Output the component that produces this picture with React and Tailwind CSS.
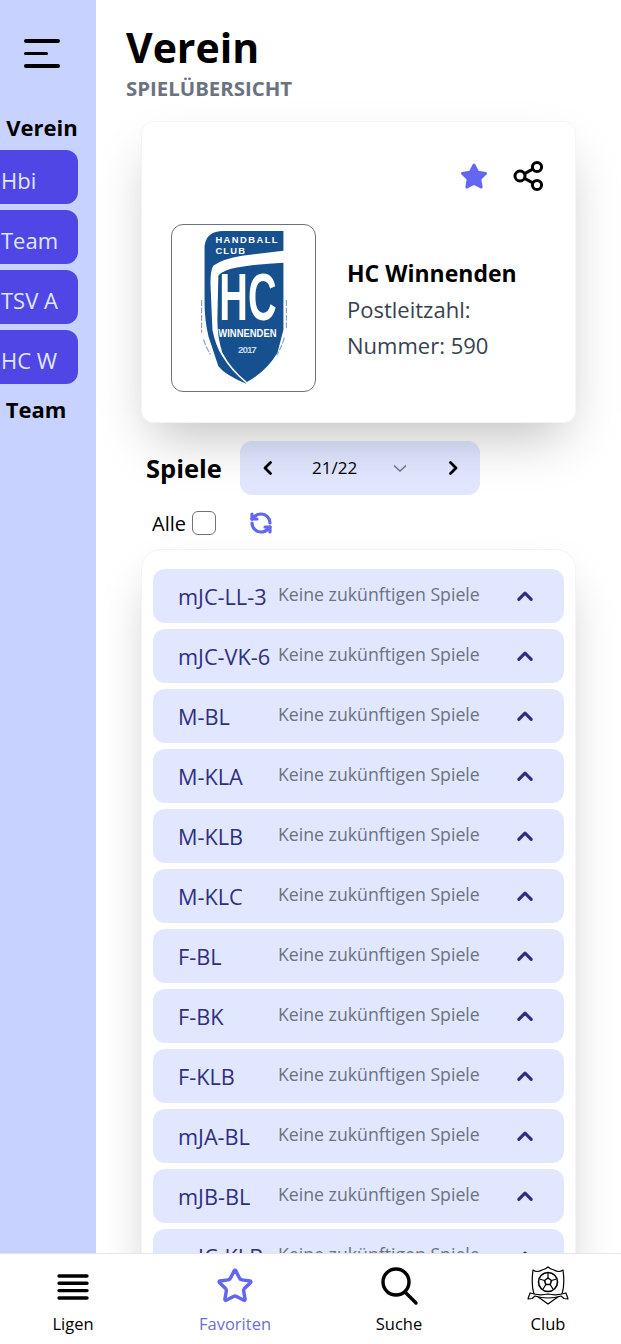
import React from "react";
import { FaStar } from "react-icons/fa";
import { Star, RefreshCcw } from "lucide-react";

const CLUBS = ["Hbi", "Team", "TSV A", "HC W"];
const LEAGUES = [
  "mJC-LL-3",
  "mJC-VK-6",
  "M-BL",
  "M-KLA",
  "M-KLB",
  "M-KLC",
  "F-BL",
  "F-BK",
  "F-KLB",
  "mJA-BL",
  "mJB-BL",
  "mJC-KLB",
];

const Chevron = ({ dir = "left", className = "" }) => (
  <svg viewBox="0 0 16 16" className={className} fill="none" stroke="currentColor" strokeWidth="2.8" strokeLinecap="round" strokeLinejoin="round">
    {dir === "left" && <path d="M10.5 2.5 5 8l5.5 5.5" />}
    {dir === "right" && <path d="M5.5 2.5 11 8l-5.5 5.5" />}
    {dir === "up" && <path d="M2.5 11 8 5.5l5.5 5.5" />}
  </svg>
);

const ClubLogo = () => (
  <svg viewBox="0 0 145 168" className="w-full h-full">
    {/* Band oben und aeusserer Streifen */}
    <path d="M33 21Q35 6 52 6H113V26L71 31Q52 34 42 41Q39 45 39 59L41 106Q44 122 51 133Q60 148 76 161Q54 152 47 143L37 113Q33 96 33 79Z" fill="#17508f" />
    {/* Schild */}
    <path d="M113 38V106L107 129Q96 148 76 159Q60 146 51 129Q46 114 46 96L47 51Q53 45 66 43Q90 39 113 38Z" fill="#17508f" />
    <path d="M30 76V109M32 116Q35 125 39 131M116 76V106M114 114Q111 124 106 132" stroke="#8aa5c4" strokeWidth="1.2" fill="none" strokeDasharray="6 1.5" />
    <text x="44" y="18" fill="#fff" fontSize="9.500" fontWeight="700" fontFamily="Liberation Sans, sans-serif" textLength="63">HANDBALL</text>
    <text x="44" y="29" fill="#fff" fontSize="9.500" fontWeight="700" fontFamily="Liberation Sans, sans-serif" textLength="30">CLUB</text>
    <text x="48" y="96" fill="#fff" fontSize="68" fontWeight="700" fontFamily="Liberation Sans, sans-serif" textLength="58" lengthAdjust="spacingAndGlyphs">HC</text>
    <text x="47" y="113" fill="#fff" fontSize="11" fontWeight="700" fontFamily="Liberation Sans, sans-serif" textLength="59" lengthAdjust="spacingAndGlyphs">WINNENDEN</text>
    <text x="67" y="130" fill="#c9d6e6" fontSize="10" fontWeight="700" fontFamily="Liberation Sans, sans-serif" textLength="19">2017</text>
  </svg>
);

const ShareIcon = () => (
  <svg viewBox="0 0 32 32" className="w-8 h-8" fill="none" stroke="#000" strokeWidth="3">
    <circle cx="8" cy="16" r="5" />
    <circle cx="25" cy="7" r="4.6" />
    <circle cx="25" cy="25" r="4.6" />
    <path d="M12.5 13.6 20.8 9.2M12.5 18.4l8.3 4.4" />
  </svg>
);

const BarsIcon = () => (
  <svg viewBox="0 0 32 28" className="w-8 h-7" stroke="#000" strokeWidth="3.4" strokeLinecap="round">
    <path d="M2 4h28M2 11.300h28M2 18.600h28M2 26h28" />
  </svg>
);

const SearchIcon = () => (
  <svg viewBox="0 0 40 42" className="w-10 h-[42px]" fill="none" stroke="#000" strokeWidth="3.4" strokeLinecap="round">
    <circle cx="17" cy="17" r="13" />
    <path d="m26 27 11 11" />
  </svg>
);

const ClubIcon = () => (
  <svg viewBox="0 0 42 42" className="w-[42px] h-[42px]" fill="none" stroke="#000" strokeWidth="1.2" strokeLinejoin="round">
    <path d="M6 5Q10 8 15 5Q19 4 21 2Q23 4 27 5Q32 8 36 5Q38 20 35 29L21 39 7 29Q4 20 6 5Z" fill="#fff" />
    <circle cx="21" cy="17" r="9.500" strokeWidth="1.600" />
    <path d="m21 13 3.500 2.500-1.300 4h-4.400l-1.300-4Z" strokeWidth="1.500" />
    <path d="M21 13V7.500M24.500 15.500l5-1.500M23.200 19.500l3 5M18.800 19.500l-3 5M17.500 15.500l-5-1.500" />
    <path d="M3 28q9 3 18 1 9 2 18-1l2 6-4-.5-3-2.500q-6 2-13 2t-13-2l-3 2.500-4 .5Z" fill="#fff" />
  </svg>
);

const NavItem = ({ icon, label, className = "text-black", spacing = "" }) => (
  <div className={`flex flex-col items-center w-[90px] ${spacing}`}>
    <div className="h-[42px] flex items-center justify-center">{icon}</div>
    <span className={`text-[16.5px] leading-6 mt-[5px] ${className}`}>{label}</span>
  </div>
);

export default function App() {
  return (
    <div className="h-screen flex flex-col overflow-hidden bg-white text-black font-['Open_Sans','Noto_Sans',sans-serif]">
      <div className="flex flex-1 min-h-0">
        {/* Seitenleiste */}
        <aside className="w-24 shrink-0 bg-[#c7d2fe] flex flex-col pt-[26px]">
          <div className="flex flex-col items-start gap-[9px] pl-6 h-[83px] pt-[13px]">
            <span className="w-9 h-[3.5px] rounded bg-black"></span>
            <span className="w-6 h-[3.5px] rounded bg-black"></span>
            <span className="w-9 h-[3.5px] rounded bg-black"></span>
          </div>
          <h2 className="text-[22px] leading-9 font-bold text-center -ml-[12px]">Verein</h2>
          <div className="flex flex-col gap-1.5 mt-[5px]">
            {CLUBS.map((c) => (
              <div key={c} className="h-[54px] w-[90px] -ml-3 pl-3.5 pt-[7px] flex items-center bg-[#4f46e5] rounded-xl text-[#e0e7ff] text-[22px] overflow-hidden whitespace-nowrap">
                <span className="-ml-px">{c}</span>
              </div>
            ))}
          </div>
          <h2 className="text-[22px] leading-9 font-bold text-center -ml-[24px] mt-[7px]">Team</h2>
        </aside>

        {/* Inhalt */}
        <main className="flex-1 min-w-0 overflow-hidden pl-[30px] pt-[21px]">
          <h1 className="text-[41px] leading-[56px] font-bold -mt-[2px]">Verein</h1>
          <p className="text-[20.4px] leading-6 font-bold text-[#6b7280] uppercase mt-px">Spielübersicht</p>

          <section className="relative ml-[15px] w-[435px] h-[302px] mt-[21px] bg-white rounded-xl border border-gray-100 shadow-2xl pl-[29px] pr-[31px] pt-[38px]">
            <div className="flex justify-end items-center gap-[24px]">
              <FaStar className="w-7 h-7 text-[#6366f1]" />
              <ShareIcon />
            </div>
            <div className="flex items-center mt-[32px]">
              <div className="w-[145px] h-[168px] shrink-0 border border-[#6b7280] rounded-xl overflow-hidden">
                <ClubLogo />
              </div>
              <div className="ml-[31px] pt-[2px]">
                <h3 className="text-[23px] leading-9 font-bold">HC Winnenden</h3>
                <p className="text-[22px] leading-9 text-[#374151]">Postleitzahl:</p>
                <p className="text-[22px] leading-9 text-[#374151]">Nummer: 590</p>
              </div>
            </div>
          </section>

          <div className="flex items-center ml-5 mt-[18px]">
            <h2 className="text-[25.500px] font-bold leading-9 w-[94px]">Spiele</h2>
            <div className="w-60 h-[54px] rounded-xl bg-[#e0e7ff] flex items-center pl-[20px] pr-[19px]">
              <Chevron dir="left" className="w-4 h-4 text-black" />
              <span className="text-[17px] ml-[36px]">21/22</span>
              <svg viewBox="0 0 16 16" className="w-4 h-4 ml-[35px] text-[#6b7280]" fill="none" stroke="currentColor" strokeWidth="1.4">
                <path d="M2 5.500 8 11l6-5.500" />
              </svg>
              <Chevron dir="right" className="w-4 h-4 text-black ml-auto" />
            </div>
          </div>

          <div className="flex items-center ml-[26px] mt-[10px] h-9">
            <span className="text-[20px] pt-[2px]">Alle</span>
            <span className="w-6 h-6 ml-[6px] rounded-md border border-[#6b7280] bg-white"></span>
            <RefreshCcw className="w-6 h-6 ml-[33px] text-[#6366f1]" strokeWidth={3.2} />
          </div>

          <section className="relative ml-[15px] w-[435px] mt-[8px] bg-white rounded-[20px] border border-gray-100 shadow-2xl px-[11px] pt-[19px] flex flex-col gap-1.5">
            {LEAGUES.map((l) => (
              <div key={l} className="h-[54px] shrink-0 rounded-xl bg-[#e0e7ff] flex items-center pl-[25px] pr-[30px]">
                <span className="w-[100px] shrink-0 text-[21.7px] pt-[2px] font-medium text-[#312e81] whitespace-nowrap">{l}</span>
                <span className="text-[17.7px] font-medium text-[#6b7280] -mt-1 whitespace-nowrap">Keine zukünftigen Spiele</span>
                <Chevron dir="up" className="w-[18px] h-[18px] ml-auto text-[#312e81]" />
              </div>
            ))}
          </section>
        </main>
      </div>

      {/* Navigation */}
      <nav className="h-[91px] shrink-0 bg-white border-t border-gray-200 flex pl-[28px] pt-[11px] relative z-10">
        <NavItem icon={<BarsIcon />} label="Ligen" />
        <NavItem icon={<Star className="w-[38px] h-[38px] text-[#6366f1]" strokeWidth={2.2} />} label="Favoriten" className="text-[#6e6fc9]" spacing="ml-[72px]" />
        <NavItem icon={<SearchIcon />} label="Suche" spacing="ml-[74px]" />
        <NavItem icon={<ClubIcon />} label="Club" spacing="ml-[59px]" />
      </nav>
    </div>
  );
}
